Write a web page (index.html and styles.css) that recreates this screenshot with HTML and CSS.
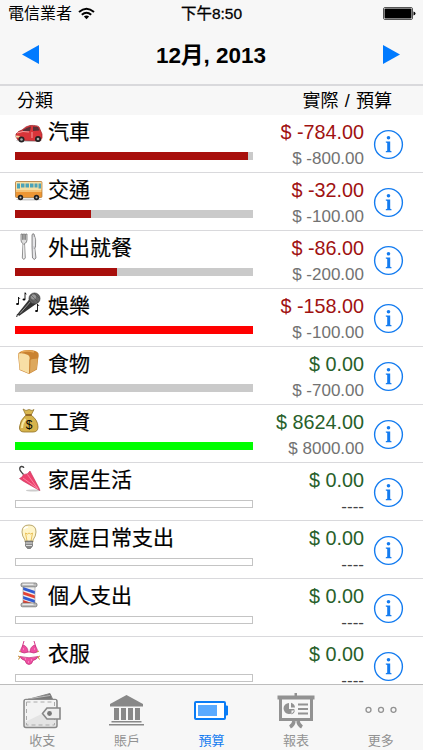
FILE: index.html
```html
<!DOCTYPE html>
<html lang="zh-Hant">
<head>
    <meta charset="UTF-8">
    <meta name="viewport" content="width=device-width, initial-scale=1.0">
    <title>預算</title>
    <link rel="stylesheet" href="styles.css">
</head>
<body>
    <div class="app">
        <div class="status-bar">
            <div class="carrier">
                <span>電信業者</span>
                <svg class="wifi" width="17" height="13" viewBox="0 0 17 13" fill="none" stroke="#000" stroke-width="2">
                    <path d="M1 5Q8.500-1.500 16 5M3.800 7.800Q8.500 3.700 13.200 7.800"/>
                    <path d="M5.900 9.500Q8.500 7.500 11.100 9.500L8.500 12.200Z" fill="#000" stroke="none"/>
                </svg>
            </div>
            <div class="time">下午8:50</div>
            <svg class="battery" width="33" height="13" viewBox="0 0 33 13">
                <rect x=".5" y=".5" width="29" height="12" rx="1.500" fill="#fff" stroke="#555"/>
                <rect x="1.500" y="1.500" width="27" height="10" rx="1"/>
                <path d="M30.500 4.500q2 .3 2 2t-2 2z"/>
            </svg>
        </div>

        <div class="nav-bar">
            <svg width="17" height="19" viewBox="0 0 17 19"><path d="M0 9.500L17 0V19Z" fill="#007aff"/></svg>
            <h1>12月, 2013</h1>
            <svg width="17" height="19" viewBox="0 0 17 19"><path d="M17 9.500L0 0V19Z" fill="#007aff"/></svg>
        </div>

        <div class="list-header">
            <span>分類</span>
            <span class="columns">實際 / 預算</span>
        </div>

        <div class="list" id="budget-list"></div>

        <div class="tab-bar">
            <div class="tab">
                <svg width="40" height="40" viewBox="0 0 40 40">
                    <path d="M4 10L28 3.500L31 10" fill="#777" stroke="#888"/>
                    <path d="M6 9L28 5.500" stroke="#bbb"/>
                    <rect x="2" y="9.500" width="33" height="28" rx="2" fill="#e4e4e4" stroke="#888" stroke-width="1.500"/>
                    <path d="M3 10h31v7L3 32z" fill="#f3f3f3"/>
                    <rect x="4.500" y="12" width="28" height="23" fill="none" stroke="#aaa" stroke-dasharray="4 3"/>
                    <path d="M38 18H25l-4.500 5.500L25 29h13z" fill="#eee" stroke="#888" stroke-width="1.600"/>
                    <circle cx="27.500" cy="23.500" r="2.400" fill="#777"/>
                </svg>
                <span>收支</span>
            </div>
            <div class="tab">
                <svg width="40" height="40" viewBox="0 0 40 40" fill="#888">
                    <path d="M19.500 5L36 14v2.500H3V14z"/>
                    <path d="M7 18h5v12H7zM14 18h5v12h-5zM21 18h5v12h-5zM28 18h5v12h-5zM4.500 31h30v1.500h-30zM2 34h35v1.500H2z"/>
                </svg>
                <span>賬戶</span>
            </div>
            <div class="tab active">
                <svg width="40" height="40" viewBox="0 0 40 40">
                    <rect x="4" y="12" width="30" height="17" rx="1" fill="#fff" stroke="#0a7cf5" stroke-width="2"/>
                    <rect x="7" y="15" width="19" height="11" fill="#5aaaff"/>
                    <path d="M34 16h2.500v9H34z" fill="#0a7cf5" stroke="#0a7cf5" stroke-width="1"/>
                </svg>
                <span>預算</span>
            </div>
            <div class="tab">
                <svg width="40" height="40" viewBox="0 0 40 40" fill="#929292">
                    <path d="M18.500 3h2.500v3h-2.500zM1.500 5.500h37v4h-37z"/>
                    <path d="M4.500 9v20.500h31V9" fill="none" stroke="#929292" stroke-width="3"/>
                    <path d="M13 13a5.500 5.500 0 1 0 5.500 6H13zM15 12.700a5.500 5.500 0 0 1 4 4.800h-4zM15.500 20.500H19a5 5 0 0 1-3.500 4z"/>
                    <path d="M22 13.500h10v2H22zM22 18h10v2H22zM22 22.500h10v2H22z"/>
                    <path d="M18 31q-.5 4-4 6M22 31q.5 4 4 6" fill="none" stroke="#929292" stroke-width="3.500"/>
                </svg>
                <span>報表</span>
            </div>
            <div class="tab">
                <svg width="40" height="40" viewBox="0 0 40 40" fill="none" stroke="#929292" stroke-width="1.300">
                    <circle cx="7.500" cy="19.800" r="2.500"/>
                    <circle cx="20" cy="19.800" r="2.500"/>
                    <circle cx="32.500" cy="19.800" r="2.500"/>
                </svg>
                <span>更多</span>
            </div>
        </div>
    </div>

    <script src="budget.js"></script>
</body>
</html>
```

FILE: styles.css
```css
:root {
    --blue: #147cf0;
    --bar-bg: #f7f7f7;
    --line: #d9d9dc;
}

* {
    box-sizing: border-box;
}

body {
    font-family: "Liberation Sans", "Noto Sans CJK TC", sans-serif;
    margin: 0;
    background: white;
    color: #000;
}

svg {
    display: block;
    flex-shrink: 0;
}

.app {
    display: flex;
    flex-direction: column;
    height: 750px;
    overflow: hidden;
}

.status-bar {
    display: grid;
    grid-template-columns: 1fr auto 1fr;
    align-items: center;
    height: 27px;
    padding: 0 8px;
    background: var(--bar-bg);
    font-size: 16px;
    line-height: 27px;
    flex-shrink: 0;
}

.carrier {
    display: flex;
    align-items: center;
    gap: 6px;
}

.time {
    font-size: 15.5px;
    -webkit-text-stroke: 0.3px #000;
}

.battery {
    justify-self: end;
    margin-right: -1px;
}

.nav-bar {
    display: flex;
    justify-content: space-between;
    align-items: center;
    height: 59px;
    padding: 0 23px 3px 22px;
    background: var(--bar-bg);
    border-bottom: 2px solid var(--line);
    flex-shrink: 0;
}

.nav-bar h1 {
    margin: 0;
    padding-top: 4px;
    font-size: 22.5px;
    line-height: 30px;
    font-weight: bold;
}

.list-header {
    display: flex;
    justify-content: space-between;
    height: 29px;
    padding: 0 31px 0 17px;
    background: var(--bar-bg);
    font-size: 18px;
    line-height: 30px;
    flex-shrink: 0;
}

.columns {
    word-spacing: 1.3px;
}

.list {
    flex: 1;
    min-height: 0;
    overflow: hidden;
}

.row {
    display: flex;
    height: 58px;
    padding-left: 14px;
    border-bottom: 1px solid var(--line);
}

.category {
    width: 239px;
}

.title {
    display: flex;
    gap: 4px;
    height: 37px;
    padding-top: 1px;
    font-size: 21px;
    line-height: 31px;
    -webkit-text-stroke: 0.2px #000;
}

.bar {
    width: 238px;
    height: 8px;
    margin-left: 1px;
    background: #cacaca;
}

.bar.empty {
    background: white;
    border: 1px solid #c4c4c4;
}

.fill {
    height: 100%;
}

.fill.used {
    background: #a80f0c;
}

.fill.over {
    background: #ff0000;
}

.fill.income {
    background: #00ff00;
}

.amounts {
    width: 111px;
    padding-top: 5px;
    text-align: right;
    white-space: nowrap;
}

.actual {
    font-size: 19.8px;
    line-height: 25px;
}

.negative {
    color: #a01212;
}

.positive {
    color: #28602a;
}

.budget {
    font-size: 17px;
    line-height: 28px;
    color: #727272;
}

.budget.none {
    color: #444;
}

.info {
    margin: 14px 0 0 9px;
}

.tab-bar {
    display: flex;
    height: 66px;
    background: var(--bar-bg);
    border-top: 1px solid #bdbdbd;
    flex-shrink: 0;
}

.tab {
    display: flex;
    flex: 1;
    flex-direction: column;
    align-items: center;
    padding-top: 5px;
    color: #929292;
    font-size: 13px;
    line-height: 21px;
}

.tab.active {
    color: var(--blue);
}
```

FILE: budget.js
```js
const icons = {
    car: `
        <ellipse cx="15" cy="24.500" rx="13" ry="1.500" fill="#ccc"/>
        <path d="M2 18q2-3 6-4 4-4 8-4.500 7-.5 9 1.500l3 7v4l-2 3-22-1-2-3z" fill="#d9353a" stroke="#9c1e25" stroke-width=".7"/>
        <path d="M9 14q4-3 8-3.500l-1 4.500-7 .5zM19 10.500l5 .5 1.500 3.500-6.500.5z" fill="#5c3038"/>
        <path d="M3 17l6-1.500 6 .5M18 16v6" stroke="#f6a0a0" fill="none"/>
        <path d="M2 19.500l4 .5-1 1.500H2z" fill="#eed9a0"/>
        <circle cx="7.500" cy="23.500" r="3" fill="#222"/><circle cx="7.500" cy="23.500" r="1.300" fill="#aaa"/>
        <circle cx="24" cy="23" r="3" fill="#222"/><circle cx="24" cy="23" r="1.300" fill="#aaa"/>`,
    bus: `
        <ellipse cx="15" cy="25.500" rx="13" ry="1" fill="#ccc"/>
        <rect x="1.500" y="7.500" width="26.500" height="16" rx="1" fill="#ed9634" stroke="#a87536" stroke-width=".7"/>
        <path d="M2 8h25.500v8H2z" fill="#f7dfa4"/>
        <path d="M3 9.500h3v5H3zM7 9.500h3.500v4H7zM11.500 9.500H15v4h-3.500zM16 9.500h3.500v4H16zM20.500 9.500h3v4h-3zM24.500 9.500h2.500v5h-2.500z" fill="#4ba3b8"/>
        <path d="M2 17h25.500" stroke="#fff0b8"/>
        <circle cx="6.500" cy="23.500" r="2.700" fill="#222"/><circle cx="6.500" cy="23.500" r="1" fill="#bbb"/>
        <circle cx="22.500" cy="23.500" r="2.700" fill="#222"/><circle cx="22.500" cy="23.500" r="1" fill="#bbb"/>`,
    dining: `
        <path d="M7 2v6q0 3 2 3.500L8.300 26q1.500 3 3 0l-.8-14.500q2.500-.5 2.500-3.500V2l-1.500.1v5.400h-.8V2H9.300v5.500h-.8V2z" fill="#ddd" stroke="#666" stroke-width=".7"/>
        <path d="M18 15V3q.5-2 2-1 2.500 5 1.500 13l-.7 1L22 26q-1.500 3-3.500 0z" fill="#d4d4d8" stroke="#666" stroke-width=".7"/>
        <path d="M9.800 13v13M20 5v9M20 17v9" stroke="#fff" stroke-width=".8"/>`,
    music: `
        <path d="M15.500 9L3.500 24l1.500 2L22 14z" fill="#333"/>
        <path d="M17 11L6 23.500" stroke="#999"/>
        <path d="M3.500 24l-.8 3" stroke="#222"/>
        <circle cx="20.500" cy="8.500" r="5.500" fill="#686868" stroke="#333" stroke-width=".7"/>
        <circle cx="19.500" cy="7" r="2.500" fill="#999"/>
        <path d="M15.500 8l6 6M17 5l6.500 6.500M20 3l5 5" stroke="#444" stroke-width=".5"/>
        <g fill="none" stroke="#222"><path d="M4.500 7v7M11 2.500V9M23.500 14v7"/></g>
        <path d="M4.500 7l2 2-2-.5zM11 2.500l2 2-2-.5zM23.500 14l2 2-2-.5z"/>
        <ellipse cx="3.500" cy="14" rx="1.500" ry="1.100"/><ellipse cx="10" cy="9.500" rx="1.500" ry="1.100"/><ellipse cx="22.500" cy="21" rx="1.500" ry="1.100"/>`,
    bread: `
        <path d="M4.500 5Q8 2 15 2q8 0 9.500 3.500.6 3-.3 5L23 21.500l-8 4.500-9.500-4L4.500 11Q3.500 8 4.500 5z" fill="#c98231"/>
        <path d="M4.800 5.500Q9 4.500 14 7q2.500 2 1.300 5L15 25.500 5.800 21.500 5 11Q4 8 4.800 5.500z" fill="#f8dfa5"/>
        <path d="M16.500 12q1.800-1.500 7.200-1.500L22.700 21 16 25z" fill="#dda85d"/>
        <path d="M7 4q7-2 13 0" stroke="#e7a957" fill="none" stroke-width="1.500"/>`,
    money: `
        <path d="M9 3l3 1.500 3-1 3 1 2-1-3 6H12z" fill="#d9b750" stroke="#8d702a" stroke-width=".7"/>
        <path d="M12 9h5q7 5 7 12 0 5-5 5h-9q-5 0-4.500-5Q6 14 12 9z" fill="#d6b34b" stroke="#927126" stroke-width=".8"/>
        <path d="M11.500 13Q8 17 8 22" stroke="#f5e6a0" stroke-width="2" fill="none"/>
        <path d="M12 9h5.500" stroke="#8a5a20" stroke-width="1.500"/>
        <text x="15.200" y="22.800" font-size="12" text-anchor="middle">$</text>`,
    umbrella: `
        <ellipse cx="19" cy="26.500" rx="7" ry="1" fill="#ccc"/>
        <path d="M9.500 10.500Q7 8 6 6 5.200 3 7.500 2.500q2-.2 2.300 1.500" stroke="#444" stroke-width="1.400" fill="none"/>
        <path d="M5.500 14.500q3-1 4-4 4 .5 6.500-3.500l1.500 3L25 24l1 2.500-3-1.500L9 17z" fill="#ed426e" stroke="#c52e57" stroke-width=".6"/>
        <path d="M9 14L24 25 13.500 10.500" fill="none" stroke="#ff94ac" stroke-width=".8"/>`,
    bulb: `
        <path d="M11 18q-3-4-3-8 0-7 7-7t7 7q0 4-3 8v2h-8z" fill="#fff5ca" stroke="#bba96f"/>
        <path d="M13 19l-1.500-8 2 1 1.500-1 1.500 1 2-1L17 19" fill="none" stroke="#e4b43d" stroke-width=".8"/>
        <path d="M10 7q1-2 4-2" stroke="#fff" fill="none" stroke-width="1.500"/>
        <path d="M11.500 19h7v5l-2 2.500h-3l-2-2.500z" fill="#888" stroke="#555" stroke-width=".6"/>
        <path d="M11.500 21h7M12 23.500h6" stroke="#ddd"/>`,
    barber: `
        <path d="M9 7h12v16H9z" fill="#eee"/>
        <path d="M9 7l12 4v3L9 10zM9 16l12 4v3L9 19z" fill="#315bd2"/>
        <path d="M9 11.500l12 4v3L9 14.500zM9 20l9 3H9z" fill="#e64234"/>
        <path d="M9 7v16M21 7v16" stroke="#999" stroke-width=".6"/>
        <rect x="7" y="3" width="16" height="3.800" rx="1.500" fill="#bbb" stroke="#666" stroke-width=".7"/>
        <rect x="7" y="23" width="16" height="3.800" rx="1.500" fill="#bbb" stroke="#666" stroke-width=".7"/>
        <path d="M8.500 4.200h11M8.500 24.200h11" stroke="#fff"/>`,
    bikini: `
        <path d="M10 3L8 9.500M20 3l2 6.500M13.500 14h3" stroke="#d7388b" fill="none"/>
        <path d="M9.500 7q4.500 2 4.500 7-4 2-7 0-1.500-2 2.500-7zM20.500 7q-4.500 2-4.500 7 4 2 7 0 1.500-2-2.500-7z" fill="#ee4ea0" stroke="#bf2c79" stroke-width=".7"/>
        <path d="M6 18.500q9 2.500 18 0-1 3-5 4-1 4-4 4t-4-4q-4-1-5-4z" fill="#ee4ea0" stroke="#bf2c79" stroke-width=".7"/>
        <path d="M6 19l-2-1M6 19l-1.500 2.500M24 19l2-1M24 19l1.500 2.500M7 14l-2-1M23 14l2-1" stroke="#c58b36"/>
        <path d="M9 11h1M20 11h1M11 21h1M17 22h1M14 24h1" stroke="#ffb6da"/>`
};

const rows = [
    { icon: 'car', name: '汽車', actual: '-784.00', budget: '-800.00', percent: 98, type: 'used' },
    { icon: 'bus', name: '交通', actual: '-32.00', budget: '-100.00', percent: 32, type: 'used' },
    { icon: 'dining', name: '外出就餐', actual: '-86.00', budget: '-200.00', percent: 43, type: 'used' },
    { icon: 'music', name: '娛樂', actual: '-158.00', budget: '-100.00', percent: 100, type: 'over' },
    { icon: 'bread', name: '食物', actual: '0.00', budget: '-700.00', percent: 0, type: 'used' },
    { icon: 'money', name: '工資', actual: '8624.00', budget: '8000.00', percent: 100, type: 'income' },
    { icon: 'umbrella', name: '家居生活', actual: '0.00' },
    { icon: 'bulb', name: '家庭日常支出', actual: '0.00' },
    { icon: 'barber', name: '個人支出', actual: '0.00' },
    { icon: 'bikini', name: '衣服', actual: '0.00' }
];

const infoIcon = `
    <svg class="info" width="31" height="31" viewBox="0 0 31 31" fill="#147cf0">
        <circle cx="15.500" cy="15.500" r="13.900" fill="none" stroke="#147cf0" stroke-width="1.400"/>
        <circle cx="15.500" cy="8.700" r="1.800"/>
        <path d="M12.800 12.500h4.400v9.300l1.300.5v1h-5.700v-1l1.400-.5v-7.700l-1.400-.5z"/>
    </svg>`;

document.getElementById('budget-list').innerHTML = rows.map(row => `
    <div class="row">
        <div class="category">
            <div class="title">
                <svg width="30" height="30" viewBox="0 0 30 30">${icons[row.icon]}</svg>
                <span>${row.name}</span>
            </div>
            ${row.budget
                ? `<div class="bar"><div class="fill ${row.type}" style="width: ${row.percent}%"></div></div>`
                : '<div class="bar empty"></div>'}
        </div>
        <div class="amounts">
            <div class="actual ${row.actual.startsWith('-') ? 'negative' : 'positive'}">$ ${row.actual}</div>
            <div class="budget ${row.budget ? '' : 'none'}">${row.budget ? '$ ' + row.budget : '----'}</div>
        </div>
        ${infoIcon}
    </div>
`).join('');
```
